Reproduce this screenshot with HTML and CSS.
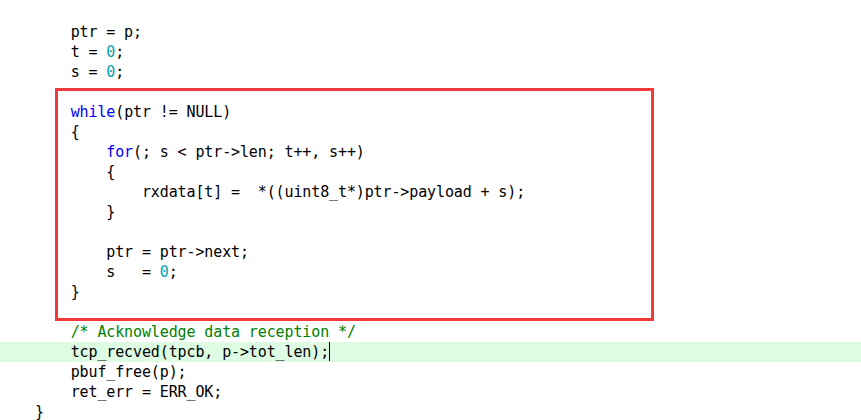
FILE: index.html
```html
<!DOCTYPE html>
<html>
<head>
<meta charset="utf-8">
<link rel="stylesheet" href="styles.css">
</head>
<body>
<div class="editor">
<pre class="code"><div class="ln">    ptr = p;</div><div class="ln">    t = <span class="num">0</span>;</div><div class="ln">    s = <span class="num">0</span>;</div><div class="ln"> </div><div class="ln">    <span class="kw">while</span>(ptr != NULL)</div><div class="ln">    {</div><div class="ln">        <span class="kw">for</span>(; s &lt; ptr-&gt;len; t++, s++)</div><div class="ln">        {</div><div class="ln">            rxdata[t] =  *((uint8_t*)ptr-&gt;payload + s);</div><div class="ln">        }</div><div class="ln"> </div><div class="ln">        ptr = ptr-&gt;next;</div><div class="ln">        s   = <span class="num">0</span>;</div><div class="ln">    }</div><div class="ln"> </div><div class="ln">    <span class="cm">/* Acknowledge data reception */</span></div><div class="ln cur">    tcp_recved(tpcb, p-&gt;tot_len);<span class="caret"></span></div><div class="ln">    pbuf_free(p);</div><div class="ln">    ret_err = ERR_OK;</div><div class="ln">}</div></pre>
<div class="mark"></div>
</div>
</body>
</html>
```
FILE: styles.css
```css
html, body {
  margin: 0;
  padding: 0;
  background: #ffffff;
}
.editor {
  position: relative;
  width: 861px;
  height: 420px;
  overflow: hidden;
}
.code {
  margin: 0;
  padding-top: 22px;
  font-family: "DejaVu Sans Mono", "Liberation Mono", monospace;
  font-size: 15px;
  letter-spacing: -0.12px;
  color: #000000;
}
.ln {
  height: 20px;
  line-height: 20px;
  padding-left: 35px;
  white-space: pre;
}
.cur {
  background: #defce4;
}
.kw { color: #0000ff; }
.num { color: #09a0b0; }
.cm { color: #008000; }
.caret {
  display: inline-block;
  width: 1px;
  height: 19px;
  background: #000;
  vertical-align: top;
}
.mark {
  position: absolute;
  left: 55px;
  top: 88px;
  width: 593px;
  height: 227px;
  border: 3px solid #f23a3a;
}
```
